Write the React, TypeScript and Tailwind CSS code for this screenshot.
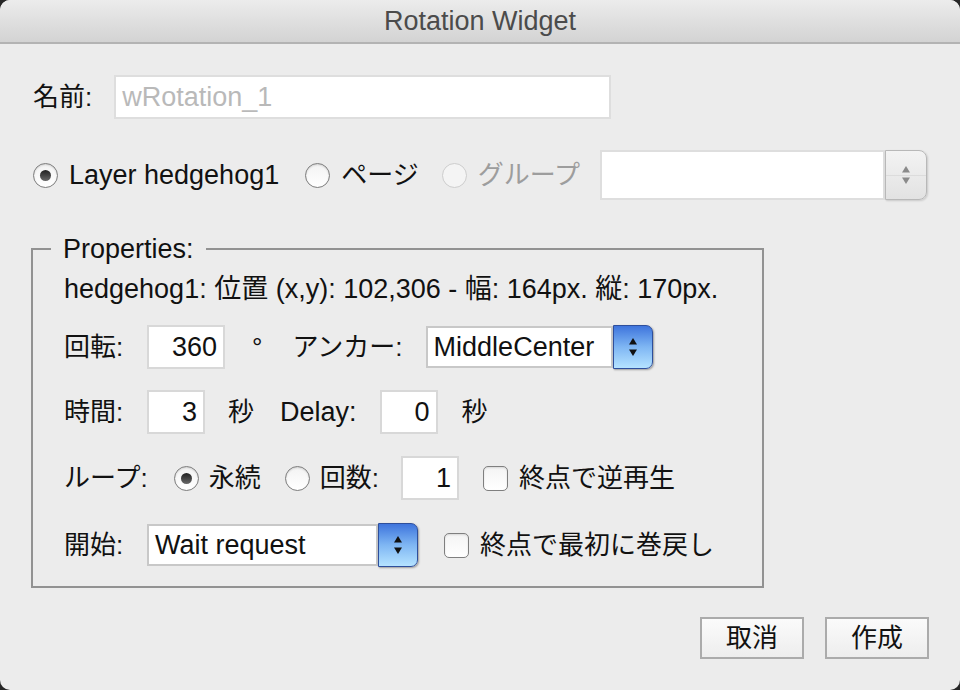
import React from "react";

const font = "font-['Liberation_Sans','Noto_Sans_CJK_JP',sans-serif]";

function Radio({ checked, disabled }: { checked?: boolean; disabled?: boolean }) {
  return (
    <div
      className={`flex h-[25px] w-[25px] shrink-0 items-center justify-center rounded-full border ${
        disabled
          ? "border-[#cdcdcd] bg-[#f4f4f4]"
          : "border-[#7d7d7d] bg-gradient-to-b from-[#f3f3f3] to-white shadow-[inset_0_1px_2px_rgba(0,0,0,0.15)]"
      }`}
    >
      {checked && (
        <div className="h-[11px] w-[11px] rounded-full bg-gradient-to-b from-[#222] to-[#6a6a6a]" />
      )}
    </div>
  );
}

function Checkbox() {
  return (
    <div className="h-[25px] w-[25px] shrink-0 rounded-[5px] border border-[#7f7f7f] bg-gradient-to-b from-[#f4f4f4] to-white shadow-[inset_0_1px_2px_rgba(0,0,0,0.12)]" />
  );
}

function Arrows({ color }: { color: string }) {
  return (
    <svg width="10" height="22" viewBox="0 0 10 22">
      <path d="M5 2 L9 8.5 L1 8.5 Z" fill={color} />
      <path d="M5 20 L9 13.5 L1 13.5 Z" fill={color} />
    </svg>
  );
}

function BlueStepper() {
  return (
    <div className="flex h-[44px] w-[40px] items-center justify-center rounded-r-[7px] border border-[#2e4f9c] bg-gradient-to-b from-[#3f74dc] via-[#7fb6f3] to-[#b5e3ff] shadow-[1px_1px_2px_rgba(0,0,0,0.35)]">
      <Arrows color="#111" />
    </div>
  );
}

function NumBox({ value, w }: { value: string; w: string }) {
  return (
    <div className={`flex h-[44px] ${w} items-center justify-end border-2 border-[#d8d8d8] bg-white pr-[6px] text-[27px]`}>
      {value}
    </div>
  );
}

export default function App() {
  return (
    <div className={`h-[690px] w-[960px] bg-[#262626] ${font} text-[26px] text-[#111]`}>
      <div className="flex h-full flex-col overflow-hidden rounded-[10px] bg-[#ececec]">
        {/* title bar */}
        <div className="flex h-[44px] shrink-0 items-center justify-center border-b-2 border-[#b3b3b3] bg-gradient-to-b from-[#ececec] to-[#d3d3d3] text-[27px] text-[#4b4b4b]">
          Rotation Widget
        </div>

        <div className="flex flex-col pl-[33px] pr-[31px]">
          {/* name */}
          <div className="mt-[31px] flex h-[44px] items-center gap-[22px]">
            <span>名前:</span>
            <div className="flex h-[44px] w-[497px] items-center border-2 border-[#dedede] bg-white pl-[6px] text-[27px] text-[#b9b9b9]">
              wRotation_1
            </div>
          </div>

          {/* target */}
          <div className="mt-[31px] flex h-[50px] items-center pr-[2px]">
            <div className="flex items-center gap-[11px]">
              <Radio checked />
              <span className="text-[27px]">Layer hedgehog1</span>
            </div>
            <div className="ml-[26px] flex items-center gap-[11px]">
              <Radio />
              <span>ページ</span>
            </div>
            <div className="ml-[23px] flex items-center gap-[11px] text-[#9d9d9d]">
              <Radio disabled />
              <span>グループ</span>
            </div>
            <div className="ml-auto flex h-[50px]">
              <div className="h-[50px] w-[285px] border-2 border-[#dedede] bg-white" />
              <div className="relative flex h-[50px] w-[42px] items-center justify-center rounded-r-[8px] border border-[#b8b8b8] bg-gradient-to-b from-[#f3f3f3] to-[#e2e2e2] shadow-[1px_1px_2px_rgba(0,0,0,0.15)]">
                <div className="absolute left-0 right-0 top-1/2 h-px bg-[#dcdcdc]" />
                <Arrows color="#8a8a8a" />
              </div>
            </div>
          </div>

          {/* properties */}
          <fieldset className="-ml-[2px] mt-[34px] w-[733px] border-2 border-[#929292] pb-[19px] pl-[31px]">
            <legend className="-ml-[13px] px-[12px] text-[27px] leading-[30px]">Properties:</legend>

            <div className="mt-[10px] text-[27px] leading-[30px]">
              hedgehog1: 位置 (x,y): 102,306 - 幅: 164px. 縦: 170px.
            </div>

            <div className="mt-[21px] flex h-[44px] items-center">
              <span className="w-[83px]">回転:</span>
              <NumBox value="360" w="w-[78px]" />
              <span className="ml-[27px]">°</span>
              <span className="ml-[30px]">アンカー:</span>
              <div className="ml-[23px] flex items-center">
                <div className="flex h-[42px] w-[187px] items-center border-2 border-[#c8c8c8] bg-white pl-[6px] text-[27px]">
                  MiddleCenter
                </div>
                <BlueStepper />
              </div>
            </div>

            <div className="mt-[21px] flex h-[44px] items-center">
              <span className="w-[83px]">時間:</span>
              <NumBox value="3" w="w-[58px]" />
              <span className="ml-[23px]">秒</span>
              <span className="ml-[26px] text-[27px]">Delay:</span>
              <div className="ml-[23px]">
                <NumBox value="0" w="w-[58px]" />
              </div>
              <span className="ml-[24px]">秒</span>
            </div>

            <div className="mt-[22px] flex h-[44px] items-center">
              <span>ループ:</span>
              <div className="ml-[26px] flex items-center gap-[10px]">
                <Radio checked />
                <span>永続</span>
              </div>
              <div className="ml-[24px] flex items-center gap-[10px]">
                <Radio />
                <span>回数:</span>
              </div>
              <div className="ml-[22px]">
                <NumBox value="1" w="w-[58px]" />
              </div>
              <div className="ml-[24px] flex items-center gap-[11px]">
                <Checkbox />
                <span>終点で逆再生</span>
              </div>
            </div>

            <div className="mt-[23px] flex h-[44px] items-center">
              <span className="w-[83px]">開始:</span>
              <div className="flex items-center">
                <div className="flex h-[42px] w-[231px] items-center border-2 border-[#c8c8c8] bg-white pl-[6px] text-[27px]">
                  Wait request
                </div>
                <BlueStepper />
              </div>
              <div className="ml-[26px] flex items-center gap-[11px]">
                <Checkbox />
                <span>終点で最初に巻戻し</span>
              </div>
            </div>
          </fieldset>

          {/* buttons */}
          <div className="mt-[29px] flex justify-end gap-[21px]">
            <button className="flex h-[42px] w-[104px] items-center justify-center border-2 border-[#ababab] bg-gradient-to-b from-[#fbfbfb] to-[#ededed]">
              取消
            </button>
            <button className="flex h-[42px] w-[104px] items-center justify-center border-2 border-[#ababab] bg-gradient-to-b from-[#fbfbfb] to-[#ededed]">
              作成
            </button>
          </div>
        </div>
      </div>
    </div>
  );
}
